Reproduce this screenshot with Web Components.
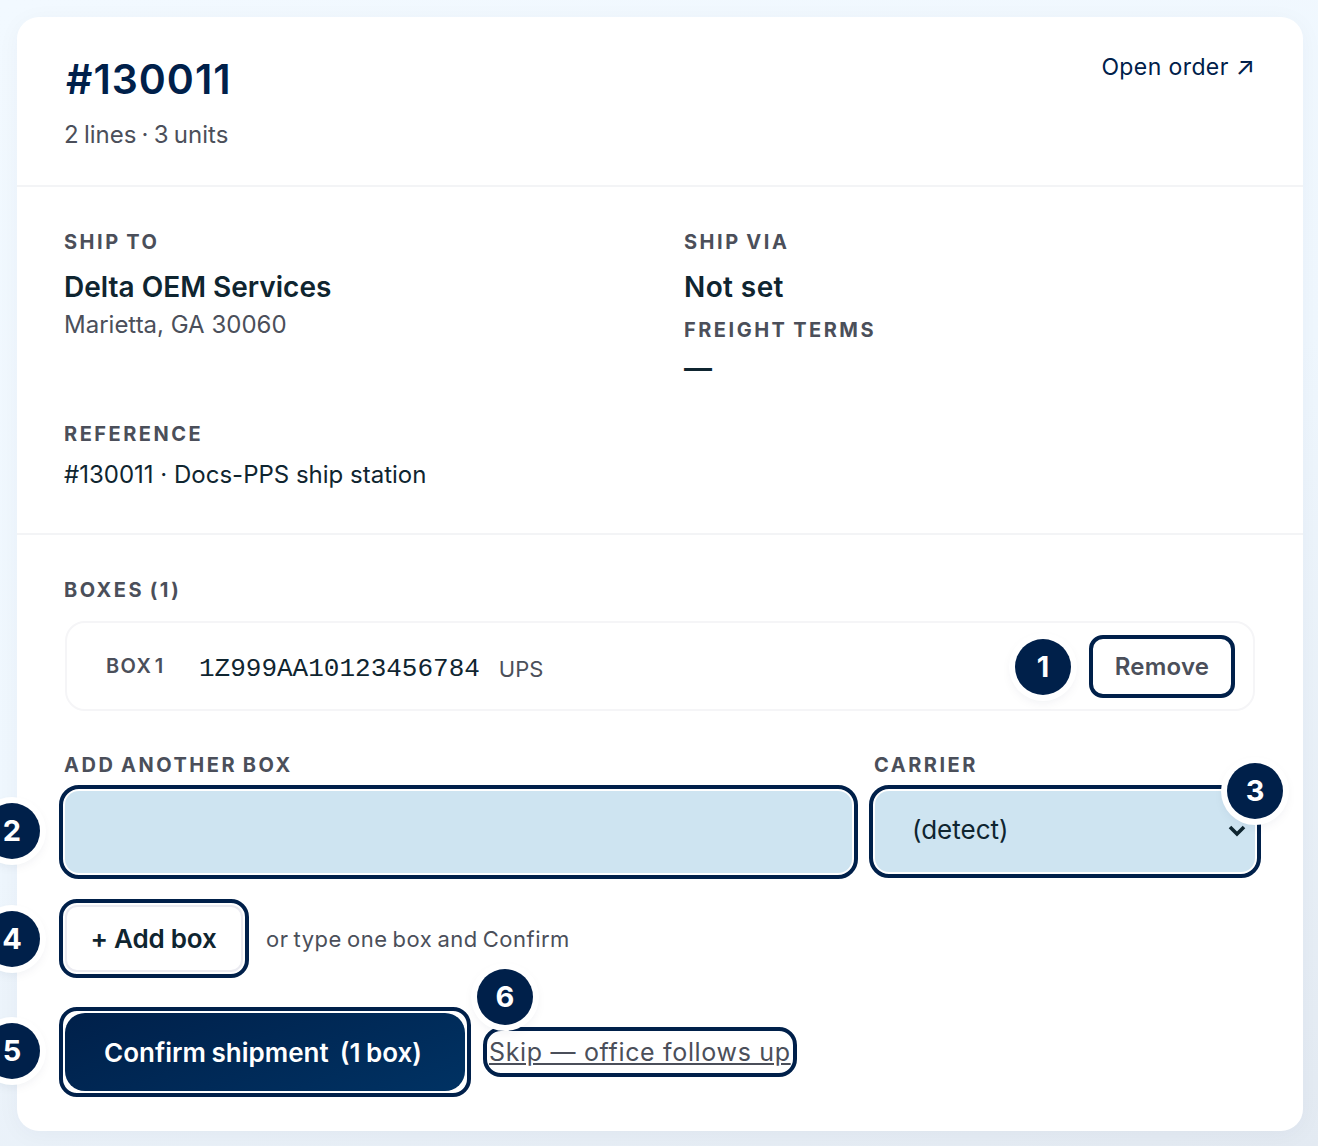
<!DOCTYPE html>
<html>
<head>
<meta charset="utf-8">
<style>
  html, body { margin: 0; height: 100%; }
  body {
    box-sizing: border-box;
    height: 1146px;
    overflow: hidden;
    padding: 17px 15px 15px 17px;
    background: linear-gradient(160deg, #f2f9ff 0%, #eff7fe 50%, #e3eaf2 100%);
    font-family: Inter, "Liberation Sans", sans-serif;
    color: #0f2530;
  }
</style>
</head>
<body>

<template id="tpl-card">
  <style>
    :host {
      display: block;
      position: relative;
      height: 1114px;
      background: #fff;
      border-radius: 22px;
      box-shadow: 0 4px 24px rgba(0, 32, 70, .04);
    }
  </style>
  <slot></slot>
</template>

<template id="tpl-section">
  <style>
    :host { display: block; padding: 0 47px; box-sizing: border-box; border-bottom: 2px solid #f3f4f6; }
    :host([last]) { border-bottom: 0; }
  </style>
  <slot></slot>
</template>

<template id="tpl-label">
  <style>
    :host {
      display: block;
      font-size: 20px;
      line-height: 24px;
      font-weight: 700;
      letter-spacing: 2.5px;
      word-spacing: -1.5px;
      color: #4b4f5a;
      text-transform: uppercase;
    }
  </style>
  <slot></slot>
</template>

<template id="tpl-badge">
  <style>
    :host {
      position: absolute;
      display: flex;
      align-items: center;
      justify-content: center;
      box-sizing: border-box;
      width: 56px;
      height: 56px;
      padding-bottom: 2px;
      border-radius: 50%;
      background: #00204a;
      color: #fff;
      font-size: 29px;
      font-weight: 700;
      box-shadow: 0 0 0 6px #fff, 0 4px 14px rgba(0, 32, 74, .12);
      z-index: 2;
    }
  </style>
  <slot></slot>
</template>

<template id="tpl-hl">
  <style>
    :host {
      display: block;
      position: relative;
      outline: 4px solid #00204a;
      outline-offset: 2px;
      border-radius: 14px;
    }
  </style>
  <slot></slot>
</template>

<template id="tpl-box-row">
  <style>
    :host {
      display: flex;
      align-items: center;
      box-sizing: border-box;
      height: 90px;
      margin: 0 1px 0 1px;
      padding: 0 18px 0 39px;
      border: 2px solid #f5f5f7;
      border-radius: 20px;
    }
    .name { font-size: 20px; font-weight: 600; letter-spacing: 1.4px; word-spacing: -4px; color: #4b4f5a; width: 93px; }
    .code { font-family: "Liberation Mono", monospace; font-size: 26px; margin-right: 19px; padding-top: 5px; }
    .carrier { font-size: 22px; color: #4b4f5a; padding-top: 5px; flex: 1; }
    button {
      box-sizing: border-box;
      width: 146px;
      height: 63px;
      font: 600 24px Inter, sans-serif;
      letter-spacing: .2px;
      color: #4b4f5a;
      background: #fff;
      border: 4px solid #00204a;
      border-radius: 14px;
    }
  </style>
  <span class="name">BOX 1</span>
  <span class="code">1Z999AA10123456784</span>
  <span class="carrier">UPS</span>
  <button>Remove</button>
</template>

<template id="tpl-add-form">
  <style>
    :host { display: grid; grid-template-columns: 788px 381px; column-gap: 22px; }
    ship-label { margin-bottom: 14px; }
    input, select {
      display: block;
      box-sizing: border-box;
      width: 100%;
      height: 82px;
      margin: 0;
      border: 0;
      outline: 0;
      border-radius: 14px;
      background-color: #cee4f1;
      color: #0f2530;
      font: 400 26px Inter, sans-serif;
    }
    select { appearance: none; height: 81px; padding: 0 0 4px 37px; }
    ship-hl { margin-left: 1px; }
    /* native arrow is too small here, so it is drawn */
    svg { position: absolute; right: 8px; top: 33px; width: 20px; height: 14px; pointer-events: none; }
  </style>
  <div>
    <ship-label>Add another box</ship-label>
    <ship-hl><input type="text"></ship-hl>
  </div>
  <div>
    <ship-label>Carrier</ship-label>
    <ship-hl>
      <select><option>(detect)</option></select>
      <svg viewBox="0 0 20 14"><path d="M3 3l7 7 7-7" fill="none" stroke="#0f2530" stroke-width="3.6"/></svg>
    </ship-hl>
  </div>
</template>

<template id="tpl-actions">
  <style>
    :host { display: block; }
    .row { display: flex; align-items: center; }
    .add { margin: 32px 0 0 1px; gap: 23px; }
    .go { margin: 35px 0 0 -5px; gap: 18px; }
    .add-btn {
      box-sizing: border-box;
      width: 178px;
      height: 67px;
      padding: 0 1px 0 0;
      font: 600 26px Inter, sans-serif;
      letter-spacing: -.2px;
      color: #0f2530;
      background: #fff;
      border: 2px solid #ebebf1;
      border-radius: 12px;
      outline: 4px solid #00204a;
      outline-offset: 2px;
    }
    .hint { font-size: 22px; letter-spacing: .48px; word-spacing: -1.5px; color: #4b4f5a; }
    .confirm-ring {
      display: flex;
      padding: 2px;
      border: 4px solid #00204a;
      border-radius: 18px;
    }
    .confirm {
      box-sizing: border-box;
      width: 400px;
      height: 78px;
      padding: 0 4px 0 0;
      font: 600 26px Inter, sans-serif;
      word-spacing: -1px;
      color: #fff;
      border: 0;
      border-radius: 20px;
      background: linear-gradient(160deg, #00204a, #003263);
    }
    .skip {
      color: #4b4f5a;
      font-size: 25px;
      letter-spacing: .67px;
      line-height: 38px;
      outline: 4px solid #00204a;
      outline-offset: 2px;
      border-radius: 12px;
    }
  </style>
  <div class="row add">
    <button class="add-btn">+ Add box</button>
    <span class="hint">or type one box and Confirm</span>
  </div>
  <div class="row go">
    <span class="confirm-ring"><button class="confirm">Confirm shipment&nbsp; (1 box)</button></span>
    <a class="skip" href="#">Skip — office follows up</a>
  </div>
</template>

<template id="tpl-order-panel">
  <style>
    :host { display: block; }
    .head {
      display: flex;
      justify-content: space-between;
      height: 168px;
    }
    h1 { margin: 37px 0 0 2px; font-size: 41px; line-height: 50px; font-weight: 600; color: #00204a; letter-spacing: 1px; }
    .sub { margin-top: 16px; font-size: 24px; word-spacing: -1.5px; line-height: 30px; color: #4b4f5a; }
    .open { margin: 34px 1px 0 0; font-size: 23px; line-height: 32px; color: #00204a; text-decoration: none; letter-spacing: .4px; }
    .open span { font-size: 25px; line-height: 0; letter-spacing: 0; }
    .ship { display: grid; grid-template-columns: 620px 1fr; grid-template-rows: 192px auto; height: 346px; padding-top: 43px; box-sizing: border-box; }
    .strong { font-size: 28px; line-height: 36px; font-weight: 600; margin-top: 15px; }
    .via { letter-spacing: .4px; }
    .muted { font-size: 24px; line-height: 32px; color: #4b4f5a; margin-top: 4px; }
    .dash { font-size: 28px; line-height: 32px; font-weight: 600; margin-top: 10px; }
    .ref { grid-column: 1 / -1; }
    .ref p { margin: 13px 0 0; font-size: 24px; line-height: 32px; }
    .boxes { padding-top: 43px; height: 580px; box-sizing: border-box; }
    ship-box-row { margin-top: 19px; }
    ship-add-form { margin-top: 42px; }
  </style>
  <ship-section>
    <div class="head">
      <div>
        <h1>#130011</h1>
        <div class="sub">2 lines · 3 units</div>
      </div>
      <a class="open" href="#">Open order <span>↗</span></a>
    </div>
  </ship-section>
  <ship-section>
    <div class="ship">
      <div>
        <ship-label>Ship to</ship-label>
        <div class="strong">Delta OEM Services</div>
        <div class="muted">Marietta, GA 30060</div>
      </div>
      <div>
        <ship-label>Ship via</ship-label>
        <div class="strong via">Not set</div>
        <ship-label style="margin-top:13px">Freight terms</ship-label>
        <div class="dash">—</div>
      </div>
      <div class="ref">
        <ship-label>Reference</ship-label>
        <p>#130011 · Docs-PPS ship station</p>
      </div>
    </div>
  </ship-section>
  <ship-section last>
    <div class="boxes">
      <ship-label>Boxes (1)</ship-label>
      <ship-box-row></ship-box-row>
      <ship-add-form></ship-add-form>
      <ship-actions></ship-actions>
    </div>
  </ship-section>
</template>

<ship-card>
  <ship-order-panel></ship-order-panel>
  <ship-badge style="left:998px;top:622px">1</ship-badge>
  <ship-badge style="left:-33px;top:786px">2</ship-badge>
  <ship-badge style="left:1210px;top:746px">3</ship-badge>
  <ship-badge style="left:-33px;top:894px">4</ship-badge>
  <ship-badge style="left:-33px;top:1006px">5</ship-badge>
  <ship-badge style="left:460px;top:952px">6</ship-badge>
</ship-card>

<script>
  // every element here is only its template in an open shadow root
  function define(name, tplId) {
    customElements.define(name, class extends HTMLElement {
      constructor() {
        super();
        let root = this.attachShadow({mode: 'open'});
        root.appendChild(document.getElementById(tplId).content.cloneNode(true));
      }
    });
  }

  define('ship-card', 'tpl-card');
  define('ship-section', 'tpl-section');
  define('ship-label', 'tpl-label');
  define('ship-badge', 'tpl-badge');
  define('ship-hl', 'tpl-hl');
  define('ship-box-row', 'tpl-box-row');
  define('ship-add-form', 'tpl-add-form');
  define('ship-actions', 'tpl-actions');
  define('ship-order-panel', 'tpl-order-panel');
</script>
</body>
</html>
